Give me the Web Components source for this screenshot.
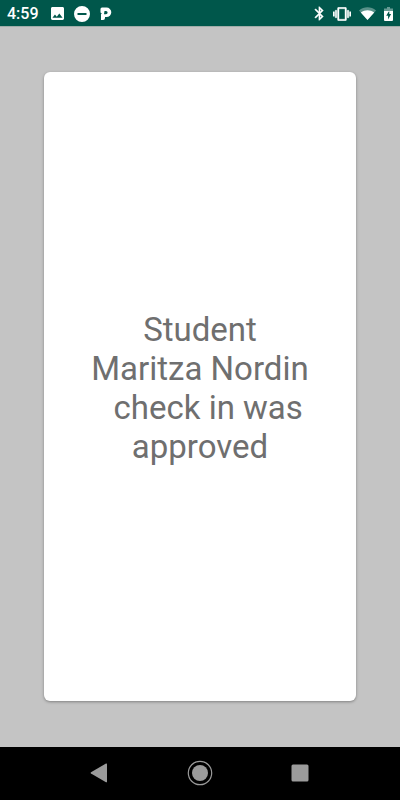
<!DOCTYPE html>
<html lang="en">
<head>
<meta charset="utf-8">
<meta name="viewport" content="width=device-width, initial-scale=1">
<title>Check in</title>
<style>
    body {
        margin: 0;
        font-family: Roboto, sans-serif;
    }
</style>
</head>
<body>
<app-screen>
    <status-bar slot="top" time="4:59"></status-bar>
    <message-card>Student
Maritza Nordin
  check in was
approved</message-card>
    <nav-bar slot="bottom"></nav-bar>
</app-screen>

<script>
// Full height frame: status bar, content, navigation
class AppScreen extends HTMLElement {
    constructor() {
        super();
        this.attachShadow({ mode: 'open' });
    }

    connectedCallback() {
        this.shadowRoot.innerHTML = `
            <style>
                :host {
                    display: flex;
                    flex-direction: column;
                    min-height: 100vh;
                    background: #c4c4c4;
                }
                main {
                    flex: 1;
                    display: flex;
                    padding: 45px 44px 46px;
                }
                ::slotted(message-card) {
                    flex: 1;
                }
            </style>
            <slot name="top"></slot>
            <main><slot></slot></main>
            <slot name="bottom"></slot>
        `;
    }
}

// Top bar with the clock, notifications and system icons
class StatusBar extends HTMLElement {
    constructor() {
        super();
        this.attachShadow({ mode: 'open' });
    }

    connectedCallback() {
        this.shadowRoot.innerHTML = `
            <style>
                :host {
                    display: block;
                    color: #fff;
                    background: #00574b;
                    border-bottom: 1px solid #9fada9;
                }
                header {
                    display: flex;
                    justify-content: space-between;
                    align-items: center;
                    height: 26px;
                    padding: 0 7px;
                }
                .group {
                    display: flex;
                    align-items: center;
                    gap: 10px;
                    padding-top: 1px;
                }
                .system {
                    gap: 8px;
                }
                time {
                    font-size: 16px;
                    line-height: 20px;
                    font-weight: 500;
                    margin-right: 2px;
                }
                svg {
                    display: block;
                    fill: currentColor;
                }
            </style>
            <header>
                <div class="group">
                    <time>${this.getAttribute('time')}</time>
                    <svg width="13" height="13" viewBox="3 3 18 18"><path d="M21 19V5c0-1.100-.900-2-2-2H5c-1.100 0-2 .900-2 2v14c0 1.100.900 2 2 2h14c1.100 0 2-.900 2-2zM8.500 13.500l2.500 3 3.500-4.500 4.500 6H5l3.500-4.500z"/></svg>
                    <svg width="16" height="16" viewBox="0 0 16 16"><path fill-rule="evenodd" d="M8 0a8 8 0 1 0 0 16A8 8 0 0 0 8 0zM3.500 7h9v2h-9z"/></svg>
                    <svg width="12" height="13" viewBox="0 0 12 13"><path fill-rule="evenodd" d="M2 .5h4.500a4.800 4.800 0 0 1 0 9.600H5v.900q0 2-2 2H1V7.200l.8-.7L.5 5.500V2Q.5.5 2 .5zM4.500 4L4 7.200h2a1.600 1.600 0 0 0 0-3.200z"/></svg>
                </div>
                <div class="group system">
                    <svg width="11" height="15" viewBox="5 1 14 22"><path stroke="currentColor" stroke-width=".5" d="M17.710 7.710L12 2h-1v7.590L6.410 5 5 6.410 10.590 12 5 17.590 6.410 19 11 14.410V22h1l5.710-5.710-4.300-4.290 4.300-4.290zM13 5.830l1.880 1.880L13 9.590V5.830zm1.880 10.460L13 18.170v-3.760l1.880 1.880z"/></svg>
                    <svg width="18" height="14" viewBox="0 3 24 18"><path stroke="currentColor" stroke-width=".5" d="M0 15h2V9H0v6zm3 2h2V7H3v10zm19-8v6h2V9h-2zm-3 8h2V7h-2v10zM16.500 3h-9C6.670 3 6 3.670 6 4.500v15c0 .830.670 1.500 1.500 1.500h9c.830 0 1.500-.670 1.500-1.500v-15c0-.830-.670-1.500-1.500-1.500zM16 19H8V5h8v14z"/></svg>
                    <svg width="17" height="13" viewBox="0 0 17 13"><path opacity=".35" d="M0 3.500C5 -.8 12 -.8 17 3.500L8.500 13z"/><path d="M1.800 5.500C6 2.500 11 2.500 15.200 5.500L8.500 13z"/></svg>
                    <svg width="9" height="14" viewBox="0 0 9 14"><path opacity=".4" d="M0 1.500h3V0h3v1.500h3V5H0z"/><path fill-rule="evenodd" d="M0 4h9v9q0 1-1 1H1q-1 0-1-1zM5.300 3.500L2.200 8.800h1.900V12.500l3-5.500H5.300z"/></svg>
                </div>
            </header>
        `;
    }
}

// White card, the message keeps its own line breaks
class MessageCard extends HTMLElement {
    constructor() {
        super();
        this.attachShadow({ mode: 'open' });
    }

    connectedCallback() {
        this.shadowRoot.innerHTML = `
            <style>
                :host {
                    display: flex;
                    align-items: center;
                    justify-content: center;
                    background: #fff;
                    border-radius: 6px;
                    box-shadow: 0 1px 3px rgba(0, 0, 0, 0.35);
                }
                p {
                    margin: 0;
                    padding-top: 2px;
                    color: #6f6f6f;
                    font-size: 33px;
                    line-height: 39px;
                    text-align: center;
                    white-space: pre-wrap;
                }
            </style>
            <p><slot></slot></p>
        `;
    }
}

// Back, home and recent buttons
class NavBar extends HTMLElement {
    constructor() {
        super();
        this.attachShadow({ mode: 'open' });
    }

    connectedCallback() {
        this.shadowRoot.innerHTML = `
            <style>
                :host {
                    display: block;
                    background: #000;
                }
                nav {
                    display: flex;
                    justify-content: space-around;
                    width: 75%;
                    margin: 0 auto;
                }
                button {
                    display: flex;
                    align-items: center;
                    justify-content: center;
                    width: 48px;
                    height: 53px;
                    padding: 0 0 1px;
                    border: 0;
                    background: none;
                    color: #9b9b9b;
                }
                svg {
                    fill: currentColor;
                }
            </style>
            <nav>
                <button type="button" aria-label="Back">
                    <svg width="26" height="26" viewBox="0 0 26 26"><path d="M4 12.300L19 3.600q1-.4 1 .6v17.500q0 1-1 .5L4 13.600q-1-.6 0-1.300z"/></svg>
                </button>
                <button type="button" aria-label="Home">
                    <svg width="26" height="26" viewBox="0 0 26 26"><circle cx="13" cy="13" r="8"/><circle cx="13" cy="13" r="11.700" fill="none" stroke="currentColor" stroke-width="1.200"/></svg>
                </button>
                <button type="button" aria-label="Recent apps">
                    <svg width="26" height="26" viewBox="0 0 26 26"><rect x="4.500" y="4.500" width="17" height="17" rx="1.500"/></svg>
                </button>
            </nav>
        `;
    }
}

customElements.define('app-screen', AppScreen);
customElements.define('status-bar', StatusBar);
customElements.define('message-card', MessageCard);
customElements.define('nav-bar', NavBar);
</script>
</body>
</html>
